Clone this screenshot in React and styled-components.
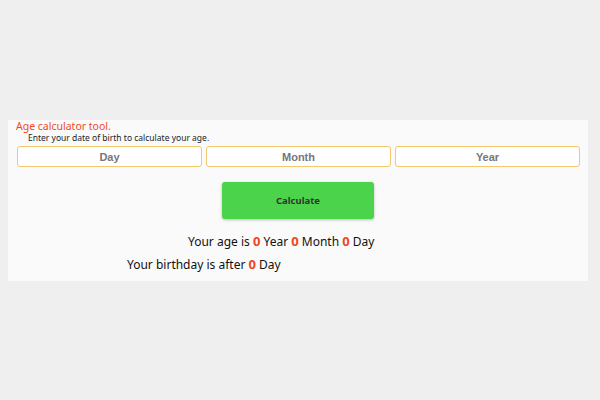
import React from "react";
import styled, { createGlobalStyle } from "styled-components";

const Global = createGlobalStyle`
  html, body { margin: 0; padding: 0; background: #efefef; }
  body { font-family: "Comic Sans MS", "Noto Sans", sans-serif; }
`;

const Panel = styled.div`
  margin: 120px 0 0 8px;
  width: 580px;
  height: 161px;
  background: #fafafa;
  box-sizing: border-box;
  padding: 0;
  display: flex;
  flex-direction: column;
`;

const Title = styled.div`
  color: #f04a1e;
  font-size: 10.5px;
  line-height: 13px;
  padding-left: 8px;
`;

const Subtitle = styled.div`
  color: #222;
  font-size: 8.5px;
  line-height: 10px;
  padding-left: 20px;
`;

const InputRow = styled.div`
  display: grid;
  grid-template-columns: repeat(3, 1fr);
  gap: 4px;
  padding: 3px 8px 0 9px;
`;

const Input = styled.input`
  box-sizing: border-box;
  height: 21px;
  width: 100%;
  border: 1px solid #f3c86e;
  border-radius: 3px;
  background: #fff;
  text-align: center;
  font-family: "Liberation Sans", Arial, sans-serif;
  font-weight: bold;
  font-size: 11px;
  outline: none;
  &::placeholder { color: #777; }
`;

const ButtonRow = styled.div`
  display: flex;
  justify-content: center;
  padding-top: 15px;
`;

const Button = styled.button`
  width: 152px;
  height: 37px;
  background: #4cd34c;
  border: none;
  border-radius: 3px;
  box-shadow: 0 1px 3px rgba(0,0,0,0.25);
  color: #333;
  font-family: "Comic Sans MS", "Noto Sans", sans-serif;
  font-weight: bold;
  font-size: 9.5px;
`;

const Line = styled.div`
  font-size: 12px;
  line-height: 16px;
  color: #111;
  padding-left: ${p => p.$indent}px;
  margin-top: ${p => p.$top}px;
`;

const Num = styled.span`
  color: #f0461e;
  font-weight: bold;
  font-size: 13px;
`;

export default function App() {
  return (
    <>
      <Global />
      <Panel>
        <Title>Age calculator tool.</Title>
        <Subtitle>Enter your date of birth to calculate your age.</Subtitle>
        <InputRow>
          <Input placeholder="Day" />
          <Input placeholder="Month" />
          <Input placeholder="Year" />
        </InputRow>
        <ButtonRow>
          <Button>Calculate</Button>
        </ButtonRow>
        <Line $indent={180} $top={14}>
          Your age is <Num>0</Num> Year <Num>0</Num> Month <Num>0</Num> Day
        </Line>
        <Line $indent={119} $top={6}>
          Your birthday is after <Num>0</Num> Day
        </Line>
      </Panel>
    </>
  );
}
